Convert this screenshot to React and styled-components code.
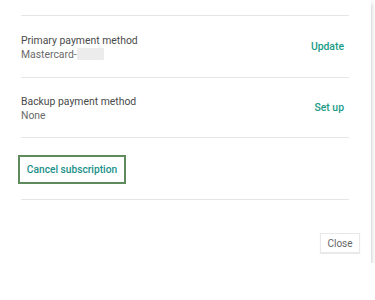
import React from "react";
import styled, { createGlobalStyle } from "styled-components";

const GlobalStyle = createGlobalStyle`
  body {
    margin: 0;
    background: #fff;
    font-family: Roboto, "Liberation Sans", Arial, sans-serif;
  }
`;

const Card = styled.div`
  width: 371px;
  background: #fff;
  box-shadow: 0 3px 5px rgba(0, 0, 0, 0.28);
  padding: 15px 22px 10px 21px;
  box-sizing: border-box;
`;

const Row = styled.div`
  display: flex;
  align-items: center;
  justify-content: space-between;
  height: ${(p) => p.$h || 61}px;
  border-top: 1px solid #e6e6e6;
  border-bottom: ${(p) => (p.$last ? "1px solid #e6e6e6" : "none")};
  box-sizing: border-box;
`;

const Info = styled.div`
  display: flex;
  flex-direction: column;
  gap: 1px;
  padding-top: 1px;
`;

const Label = styled.div`
  font-size: 10.4px;
  color: #4a4a4a;
  line-height: 13px;
`;

const Value = styled.div`
  font-size: 10.4px;
  color: #6a6a6a;
  line-height: 13px;
  display: flex;
  align-items: center;
`;

const Masked = styled.span`
  display: inline-block;
  width: 27px;
  height: 12px;
  background: #ececec;
  border-radius: 1px;
`;

const LinkButton = styled.button`
  background: none;
  border: none;
  padding: 0;
  margin-right: 5px;
  font-family: inherit;
  font-size: 10.4px;
  font-weight: 500;
  color: #1b9a87;
  cursor: pointer;
`;

const CancelBox = styled.button`
  margin-left: -3px;
  margin-top: 1px;
  width: 108px;
  height: 29px;
  background: #fff;
  border: 2px solid #5e8a5c;
  font-family: inherit;
  font-size: 10.2px;
  font-weight: 500;
  color: #1b8f8a;
  padding: 0;
  cursor: pointer;
`;

const Footer = styled.div`
  display: flex;
  justify-content: flex-end;
  padding-top: 33px;
  margin-right: -11px;
`;

const CloseButton = styled.button`
  width: 40px;
  height: 20px;
  background: #fff;
  border: 1px solid #e8e8e8;
  box-shadow: 0 1px 1px rgba(0, 0, 0, 0.08);
  font-family: inherit;
  font-size: 10px;
  color: #666;
  padding: 0;
`;

export default function App() {
  return (
    <>
      <GlobalStyle />
      <Card>
        <Row $h={62}>
          <Info>
            <Label>Primary payment method</Label>
            <Value>
              Mastercard-<Masked />
            </Value>
          </Info>
          <LinkButton>Update</LinkButton>
        </Row>
        <Row $h={60}>
          <Info>
            <Label>Backup payment method</Label>
            <Value>None</Value>
          </Info>
          <LinkButton>Set up</LinkButton>
        </Row>
        <Row $h={63} $last>
          <CancelBox>Cancel subscription</CancelBox>
        </Row>
        <Footer>
          <CloseButton>Close</CloseButton>
        </Footer>
      </Card>
    </>
  );
}
